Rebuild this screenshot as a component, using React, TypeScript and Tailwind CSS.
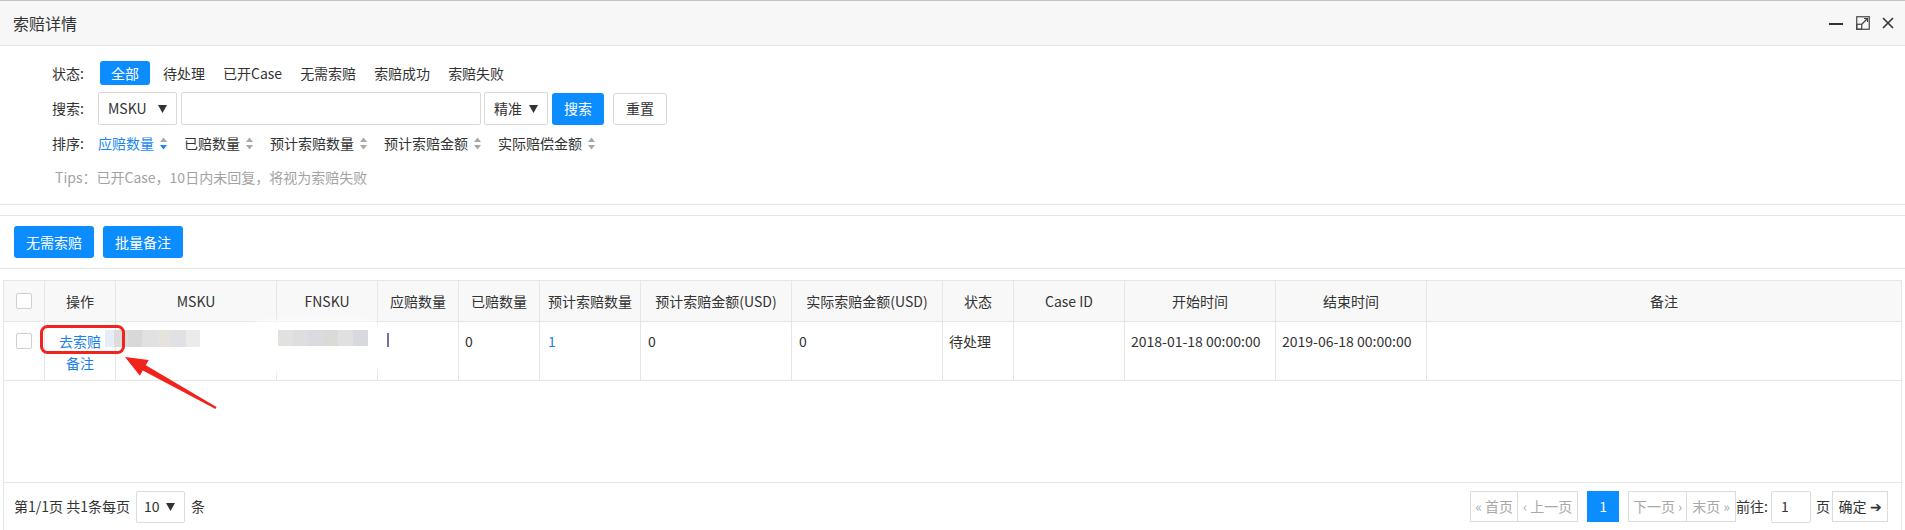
import React from 'react';

const tabs = ['待处理', '已开Case', '无需索赔', '索赔成功', '索赔失败'];
const sorts = ['已赔数量', '预计索赔数量', '预计索赔金额', '实际赔偿金额'];
const headers = [
  '操作',
  'MSKU',
  'FNSKU',
  '应赔数量',
  '已赔数量',
  '预计索赔数量',
  '预计索赔金额(USD)',
  '实际索赔金额(USD)',
  '状态',
  'Case ID',
  '开始时间',
  '结束时间',
  '备注',
];

function SortIcon({ active }: { active?: boolean }) {
  return (
    <svg width="7" height="13" viewBox="0 0 7 13" className="ml-[6px]">
      <polygon points="0,5 3.5,0.5 7,5" fill="#a8a8a8" />
      <polygon points="0,8 3.5,12.5 7,8" fill={active ? '#1a88f0' : '#a8a8a8'} />
    </svg>
  );
}

function Caret() {
  return (
    <svg width="9" height="8" viewBox="0 0 9 8">
      <polygon points="0,0 9,0 4.5,8" fill="#333" />
    </svg>
  );
}

function Checkbox() {
  return <span className="block w-[16px] h-[16px] rounded-[2px] border border-[#cfcfcf] bg-white" />;
}

export default function App() {
  return (
    <div className="relative w-[1905px] h-[530px] overflow-hidden bg-white text-[14px] text-[#333] font-['Noto_Sans_CJK_SC','Microsoft_YaHei',sans-serif]">
      {/* title bar */}
      <div className="h-[46px] flex items-center justify-between bg-[#f7f7f7] border-t border-b border-t-[#c4c4c4] border-b-[#e4e4e4] pl-[13px] pr-[11px]">
        <span className="text-[16px]">索赔详情</span>
        <div className="flex items-center">
          <svg width="14" height="14" viewBox="0 0 14 14">
            <line x1="0" y1="8" x2="14" y2="8" stroke="#333" strokeWidth="2" />
          </svg>
          <svg width="14" height="14" viewBox="0 0 14 14" className="ml-[13px]">
            <rect x="0.75" y="0.75" width="12.5" height="12.5" fill="none" stroke="#444" strokeWidth="1.2" />
            <rect x="0.75" y="8.25" width="5" height="5" fill="none" stroke="#444" strokeWidth="1.2" />
            <line x1="6" y1="8" x2="11.5" y2="2.5" stroke="#444" strokeWidth="1.2" />
            <polyline points="8,2.5 11.5,2.5 11.5,6" fill="none" stroke="#444" strokeWidth="1.2" />
          </svg>
          <svg width="12" height="12" viewBox="0 0 12 12" className="ml-[12px]">
            <line x1="1" y1="1" x2="11" y2="11" stroke="#333" strokeWidth="1.6" />
            <line x1="11" y1="1" x2="1" y2="11" stroke="#333" strokeWidth="1.6" />
          </svg>
        </div>
      </div>

      {/* filters */}
      <div className="pl-[52px] pt-[15px] pb-[17px] border-b border-[#e6e6e6]">
        <div className="flex items-center h-[24px]">
          <span className="w-[48px]">状态:</span>
          <span className="h-[24px] px-[11px] flex items-center rounded-[3px] bg-[#0b8cff] text-white">全部</span>
          <div className="flex items-center gap-[18px] ml-[13px]">
            {tabs.map(t => (
              <span key={t}>{t}</span>
            ))}
          </div>
        </div>
        <div className="flex items-center h-[33px] mt-[7px]">
          <span className="w-[46px]">搜索:</span>
          <div className="w-[79px] h-[33px] border border-[#d9d9d9] rounded-[2px] flex items-center justify-between pl-[9px] pr-[9px]">
            <span>MSKU</span>
            <Caret />
          </div>
          <div className="w-[300px] h-[33px] ml-[4px] border border-[#d9d9d9] rounded-[2px]" />
          <div className="w-[64px] h-[33px] ml-[3px] border border-[#d9d9d9] rounded-[2px] flex items-center justify-between pl-[9px] pr-[9px]">
            <span>精准</span>
            <Caret />
          </div>
          <button className="w-[52px] h-[32px] ml-[4px] rounded-[3px] bg-[#0b8cff] text-white">搜索</button>
          <button className="w-[54px] h-[32px] ml-[9px] rounded-[3px] border border-[#d9d9d9] bg-white">重置</button>
        </div>
        <div className="flex items-center h-[20px] mt-[8px]">
          <span className="w-[46px]">排序:</span>
          <span className="text-[#1a88f0]">应赔数量</span>
          <SortIcon active />
          {sorts.map(s => (
            <React.Fragment key={s}>
              <span className="ml-[17px]">{s}</span>
              <SortIcon />
            </React.Fragment>
          ))}
        </div>
        <div className="h-[20px] mt-[14px] pl-[3px] flex items-center text-[#a3a3a3]">
          Tips：已开Case，10日内未回复，将视为索赔失败
        </div>
      </div>

      {/* toolbar */}
      <div className="mt-[10px] border-y border-[#e6e6e6] pt-[10px] pb-[10px] pl-[14px] flex gap-[9px]">
        <button className="w-[80px] h-[32px] rounded-[3px] bg-[#0b8cff] text-white">无需索赔</button>
        <button className="w-[80px] h-[32px] rounded-[3px] bg-[#0b8cff] text-white">批量备注</button>
      </div>

      {/* table */}
      <div className="mt-[11px] mx-[3px] h-[251px] border-x border-b border-[#e6e6e6] flex flex-col">
        <div className="grid grid-cols-[41px_71px_161px_101px_81px_81px_101px_151px_151px_71px_111px_151px_151px_1fr] border-y border-[#e6e6e6] bg-[#f8f8f8]">
          <div className="h-[40px] border-r border-[#e6e6e6] flex items-center justify-center">
            <Checkbox />
          </div>
          {headers.map((h, i) => (
            <div
              key={h}
              className={
                i === headers.length - 1
                  ? 'h-[40px] flex items-center justify-center'
                  : 'h-[40px] border-r border-[#e6e6e6] flex items-center justify-center'
              }
            >
              {h}
            </div>
          ))}
        </div>
        <div className="grid grid-cols-[41px_71px_161px_101px_81px_81px_101px_151px_151px_71px_111px_151px_151px_1fr] border-b border-[#e6e6e6] leading-[22px]">
          <div className="h-[58px] border-r border-[#e6e6e6] flex justify-center pt-[11px]">
            <Checkbox />
          </div>
          <div className="h-[58px] border-r border-[#e6e6e6] pt-[8px] flex flex-col items-center text-[#1a7fe8]">
            <span>去索赔</span>
            <span>备注</span>
          </div>
          <div className="h-[58px] border-r border-[#e6e6e6]" />
          <div className="h-[58px] border-r border-[#e6e6e6]" />
          <div className="h-[58px] border-r border-[#e6e6e6]" />
          <div className="h-[58px] border-r border-[#e6e6e6] pt-[8px] pl-[6px]">0</div>
          <div className="h-[58px] border-r border-[#e6e6e6] pt-[8px] pl-[8px] text-[#1a7fe8]">1</div>
          <div className="h-[58px] border-r border-[#e6e6e6] pt-[8px] pl-[7px]">0</div>
          <div className="h-[58px] border-r border-[#e6e6e6] pt-[8px] pl-[7px]">0</div>
          <div className="h-[58px] border-r border-[#e6e6e6] pt-[8px] pl-[6px]">待处理</div>
          <div className="h-[58px] border-r border-[#e6e6e6]" />
          <div className="h-[58px] border-r border-[#e6e6e6] pt-[8px] pl-[6px]">2018-01-18 00:00:00</div>
          <div className="h-[58px] border-r border-[#e6e6e6] pt-[8px] pl-[6px]">2019-06-18 00:00:00</div>
          <div className="h-[58px]" />
        </div>
        <div className="flex-1" />

        {/* pagination */}
        <div className="h-[48px] border-t border-[#e6e6e6] flex items-center justify-between pl-[10px] pr-[13px]">
          <div className="flex items-center">
            <span>第1/1页 共1条每页</span>
            <div className="ml-[6px] w-[49px] h-[32px] border border-[#dcdcdc] rounded-[2px] flex items-center justify-between pl-[7px] pr-[9px]">
              <span>10</span>
              <Caret />
            </div>
            <span className="ml-[6px]">条</span>
          </div>
          <div className="flex items-center">
            <span className="w-[48px] h-[31px] border border-[#dcdcdc] flex items-center justify-center text-[#a8a8a8]">« 首页</span>
            <span className="w-[60px] h-[31px] border border-l-0 border-[#dcdcdc] flex items-center justify-center text-[#a8a8a8]">‹ 上一页</span>
            <span className="ml-[9px] w-[32px] h-[31px] bg-[#0b8cff] text-white flex items-center justify-center">1</span>
            <span className="ml-[9px] w-[59px] h-[31px] border border-[#dcdcdc] flex items-center justify-center text-[#a8a8a8]">下一页 ›</span>
            <span className="w-[49px] h-[31px] border border-l-0 border-[#dcdcdc] flex items-center justify-center text-[#a8a8a8]">末页 »</span>
            <span>前往:</span>
            <span className="ml-[3px] w-[40px] h-[32px] border border-[#dcdcdc] rounded-[2px] flex items-center pl-[9px]">1</span>
            <span className="ml-[5px]">页</span>
            <span className="ml-[2px] w-[56px] h-[31px] border border-[#dcdcdc] flex items-center justify-center">确定 ➔</span>
          </div>
        </div>
      </div>

      {/* blurred values */}
      <div className="absolute left-[246px] top-[321px] w-[140px] h-[52px] rounded-[20px] bg-white blur-[3px]" />
      <div className="absolute left-[105px] top-[330px] flex blur-[0.6px]">
        <span className="w-[9px] h-[17px] bg-[#e6eef9]" />
        <span className="w-[14px] h-[17px] bg-[#dcdcdc]" />
        <span className="w-[14px] h-[17px] bg-[#d8d8d8]" />
        <span className="w-[15px] h-[17px] bg-[#e1e1e1]" />
        <span className="w-[14px] h-[17px] bg-[#e6e3df]" />
        <span className="w-[15px] h-[17px] bg-[#dfe1e5]" />
        <span className="w-[14px] h-[17px] bg-[#ebebeb]" />
      </div>
      <div className="absolute left-[278px] top-[330px] flex blur-[0.6px]">
        <span className="w-[15px] h-[16px] bg-[#e3e1de]" />
        <span className="w-[15px] h-[16px] bg-[#dedede]" />
        <span className="w-[15px] h-[16px] bg-[#d9dbde]" />
        <span className="w-[15px] h-[16px] bg-[#dcdad7]" />
        <span className="w-[15px] h-[16px] bg-[#e0e0e0]" />
        <span className="w-[15px] h-[16px] bg-[#d7d9dc]" />
      </div>
      <div className="absolute left-[387px] top-[333px] w-[2px] h-[14px] bg-[#7d68a8]" />

      {/* annotation */}
      <svg className="absolute left-0 top-0 pointer-events-none" width="1905" height="530" viewBox="0 0 1905 530">
        <rect x="41.5" y="326.5" width="82" height="26" rx="6" fill="none" stroke="#f2231d" strokeWidth="3" />
        <polygon
          points="125,357 148.7,359.9 145.8,365.2 216.5,407.1 215.5,408.9 142.8,370.4 139.9,375.7"
          fill="#f2231d"
        />
      </svg>
    </div>
  );
}
